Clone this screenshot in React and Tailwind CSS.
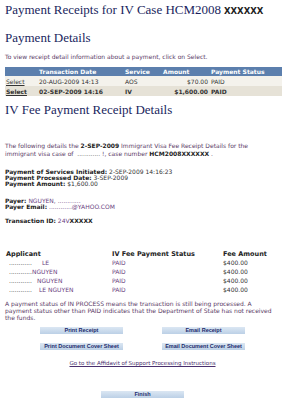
import React from "react";

const serif = "font-['Liberation_Serif','Times_New_Roman',serif]";

const Btn = ({ children, className = "" }) => (
  <div
    className={`h-[7px] w-[83px] whitespace-nowrap bg-gradient-to-b from-[#dbe7f3] to-[#bcd0e6] text-center font-['Liberation_Sans',sans-serif] font-bold text-[5.5px] leading-[7px] text-[#1b2a6b] ${className}`}
  >
    {children}
  </div>
);

const applicants = [
  { dots: "............", name: "LE", pad: "pl-[10px]" },
  { dots: "............", name: "NGUYEN", pad: "pl-0" },
  { dots: "............", name: "NGUYEN", pad: "pl-[5px]" },
  { dots: "............", name: "LE NGUYEN", pad: "pl-[7px]" },
];

export default function App() {
  return (
    <div className="h-[400px] w-[285px] overflow-hidden bg-white px-[5px] font-['DejaVu_Sans','Verdana',sans-serif] text-[6px] leading-[7px] text-[#333]">
      {/* Page title */}
      <h1 className={`${serif} whitespace-nowrap pt-[2px] text-[13px] leading-[16px] text-[#1a1f5e]`}>
        Payment Receipts for IV Case HCM2008
        <span className="font-['DejaVu_Sans',sans-serif] text-[8.5px] font-bold text-[#222]"> XXXXXX</span>
      </h1>

      <h2 className={`${serif} mt-[11px] text-[13px] leading-[16px] text-[#1a1f5e]`}>Payment Details</h2>
      <p className="mt-[7px] text-[#5a3a66]">To view receipt detail information about a payment, click on Select.</p>

      {/* Payments table */}
      <table className="mt-[7px] w-[277px] table-fixed border-collapse whitespace-nowrap">
        <colgroup>
          <col className="w-[32px]" />
          <col className="w-[86px]" />
          <col className="w-[37px]" />
          <col className="w-[49px]" />
          <col />
        </colgroup>
        <thead>
          <tr className="h-[9px] bg-[#5c7fad] text-left font-bold text-white">
            <th></th>
            <th className="pl-[2px]">Transaction Date</th>
            <th className="pl-[2px]">Service</th>
            <th className="pl-[3px]">Amount</th>
            <th className="pl-[2px]">Payment Status</th>
          </tr>
        </thead>
        <tbody>
          <tr className="h-[10px] bg-[#f4f2ec]">
            <td className="pl-[1px] underline">Select</td>
            <td className="pl-[2px]">20-AUG-2009 14:13</td>
            <td className="pl-[2px]">AOS</td>
            <td className="pr-[1px] text-right">$70.00</td>
            <td className="pl-[2px]">PAID</td>
          </tr>
          <tr className="h-[10px] bg-[#e6e2d7] font-bold">
            <td className="pl-[1px] underline">Select</td>
            <td className="pl-[2px]">02-SEP-2009 14:16</td>
            <td className="pl-[2px]">IV</td>
            <td className="pr-[1px] text-right">$1,600.00</td>
            <td className="pl-[2px]">PAID</td>
          </tr>
        </tbody>
      </table>

      <h2 className={`${serif} mt-[6px] text-[13px] leading-[16px] text-[#1a1f5e]`}>IV Fee Payment Receipt Details</h2>

      <p className="mt-[24px] leading-[7.5px] text-[#5a3a66]">
        The following details the <b className="text-[#222]">2-SEP-2009</b> Immigrant Visa Fee Receipt Details for the
        immigrant visa case of &nbsp;<span className="text-[#555]">............</span> !, case number{" "}
        <b className="text-[#222]">HCM2008XXXXXX</b> .
      </p>

      <div className="mt-[11px]">
        <p><b className="text-[#222]">Payment of Services Initiated:</b> 2-SEP-2009 14:16:23</p>
        <p className="-mt-[1px]"><b className="text-[#222]">Payment Processed Date:</b> 3-SEP-2009</p>
        <p className="-mt-[1px]"><b className="text-[#222]">Payment Amount:</b> $1,600.00</p>
      </div>

      <div className="mt-[10px]">
        <p><b className="text-[#222]">Payer:</b> <span className="text-[#6b3f7f]">NGUYEN, ............</span></p>
        <p className="-mt-[1px]"><b className="text-[#222]">Payer Email:</b> <span className="text-[#6b3f7f]">............@YAHOO.COM</span></p>
      </div>

      <p className="mt-[7px]">
        <b className="text-[#222]">Transaction ID:</b> <span className="text-[#6b3f7f]">24V</span><b className="text-[#222]">XXXXX</b>
      </p>

      {/* Applicants */}
      <div className="mt-[27px] grid grid-cols-[106px_111px_1fr] pl-[1px]">
        <b className="text-[6.5px] text-[#222]">Applicant</b>
        <b className="text-[6.5px] text-[#222]">IV Fee Payment Status</b>
        <b className="text-[6.5px] text-[#222]">Fee Amount</b>
        {applicants.map((a, i) => (
          <React.Fragment key={i}>
            <div className="mt-[1px] flex h-[8px]">
              <span className="pl-[3px]">{a.dots}</span>
              <span className={`${a.pad} text-[#6b3f7f]`}>{a.name}</span>
            </div>
            <div className="mt-[1px] h-[8px] text-[#6b3f7f]">PAID</div>
            <div className="mt-[1px] h-[8px]">$400.00</div>
          </React.Fragment>
        ))}
      </div>

      <p className="mt-[6px] text-[#5a3a66]">
        A payment status of IN PROCESS means the transaction is still being processed. A payment status other than
        PAID indicates that the Department of State has not received the funds.
      </p>

      {/* Actions */}
      <div className="mt-[6px] flex flex-col items-center">
        <div className="flex gap-[39px]">
          <Btn>Print Receipt</Btn>
          <Btn>Email Receipt</Btn>
        </div>
        <div className="mt-[9px] flex gap-[39px]">
          <Btn>Print Document Cover Sheet</Btn>
          <Btn>Email Document Cover Sheet</Btn>
        </div>
        <a className="mt-[10px] whitespace-nowrap text-[5.5px] leading-[7px] text-[#4a2f6e] underline">
          Go to the Affidavit of Support Processing Instructions
        </a>
        <Btn className="mt-[24px]">Finish</Btn>
      </div>
    </div>
  );
}
